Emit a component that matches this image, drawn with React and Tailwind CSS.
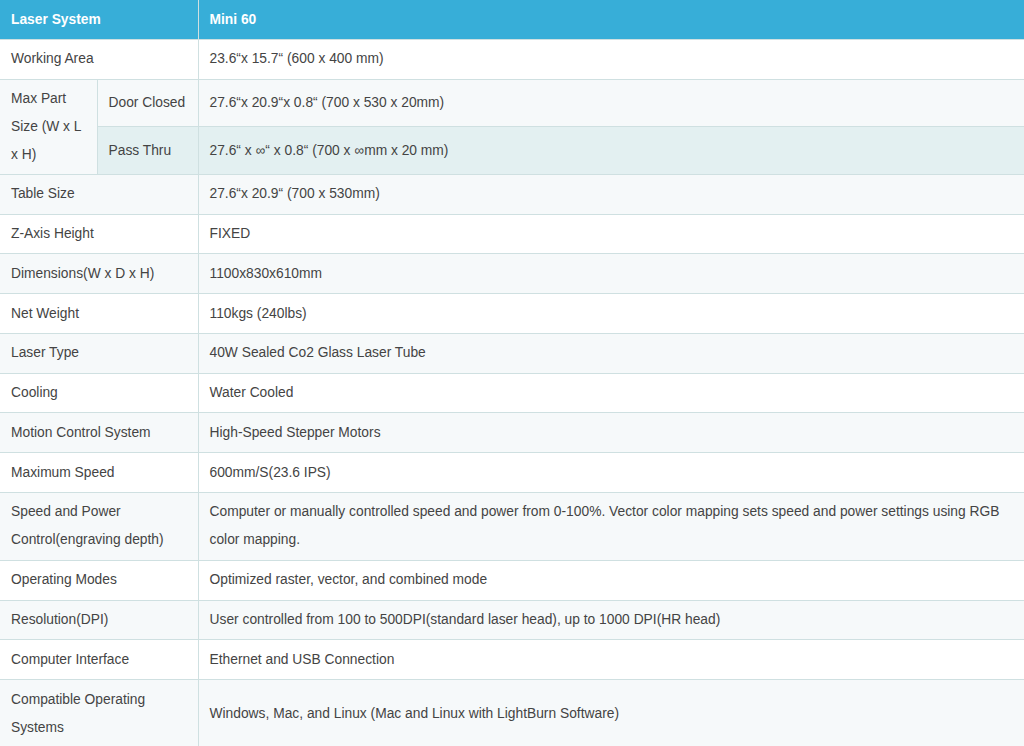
import React from 'react';

const rows = [
  ['Table Size', '27.6“x 20.9“ (700 x 530mm)'],
  ['Z-Axis Height', 'FIXED'],
  ['Dimensions(W x D x H)', '1100x830x610mm'],
  ['Net Weight', '110kgs (240lbs)'],
  ['Laser Type', '40W Sealed Co2 Glass Laser Tube'],
  ['Cooling', 'Water Cooled'],
  ['Motion Control System', 'High-Speed Stepper Motors'],
  ['Maximum Speed', '600mm/S(23.6 IPS)'],
  ['Speed and Power Control(engraving depth)', 'Computer or manually controlled speed and power from 0-100%. Vector color mapping sets speed and power settings using RGB color mapping.'],
  ['Operating Modes', 'Optimized raster, vector, and combined mode'],
  ['Resolution(DPI)', 'User controlled from 100 to 500DPI(standard laser head), up to 1000 DPI(HR head)'],
  ['Computer Interface', 'Ethernet and USB Connection'],
  ['Compatible Operating Systems', 'Windows, Mac, and Linux (Mac and Linux with LightBurn Software)'],
];

const cell = 'border border-[#cfe0e1] px-[11px] py-[5.4px] align-middle';

export default function App() {
  return (
    <div className="w-[1024px] bg-white font-['Liberation_Sans',Arial,sans-serif] text-[13.8px] leading-[28px] text-[#444]">
      <table className="w-full border-collapse table-fixed">
        <colgroup>
          <col className="w-[97px]" />
          <col className="w-[101px]" />
          <col />
        </colgroup>
        <thead>
          <tr className="bg-[#37aed8] text-white font-bold">
            <th colSpan={2} className="border-r border-r-[#cfe0e1] px-[11px] py-[5.5px] text-left">Laser System</th>
            <th className="px-[11px] py-[5.5px] text-left">Mini 60</th>
          </tr>
        </thead>
        <tbody>
          <tr className="bg-white">
            <td colSpan={2} className={cell + ' border-l-0'}>Working Area</td>
            <td className={cell + ' border-r-0'}>23.6“x 15.7“ (600 x 400 mm)</td>
          </tr>
          <tr className="bg-[#f6f9fa]">
            <td rowSpan={2} className="border border-l-0 border-[#cfe0e1] px-[11px] py-[5px] align-middle">Max Part Size (W x L x H)</td>
            <td className={cell}>Door Closed</td>
            <td className={cell + ' border-r-0'}>27.6“x 20.9“x 0.8“ (700 x 530 x 20mm)</td>
          </tr>
          <tr className="bg-[#e3f0f1]">
            <td className={cell}>Pass Thru</td>
            <td className={cell + ' border-r-0'}>27.6“ x ∞“ x 0.8“ (700 x ∞mm x 20 mm)</td>
          </tr>
          {rows.map(([k, v], i) => (
            <tr key={k} className={i % 2 === 0 ? 'bg-[#f6f9fa]' : 'bg-white'}>
              <td colSpan={2} className={cell + ' border-l-0'}>{k}</td>
              <td className={cell + ' border-r-0'}>{v}</td>
            </tr>
          ))}
        </tbody>
      </table>
    </div>
  );
}
